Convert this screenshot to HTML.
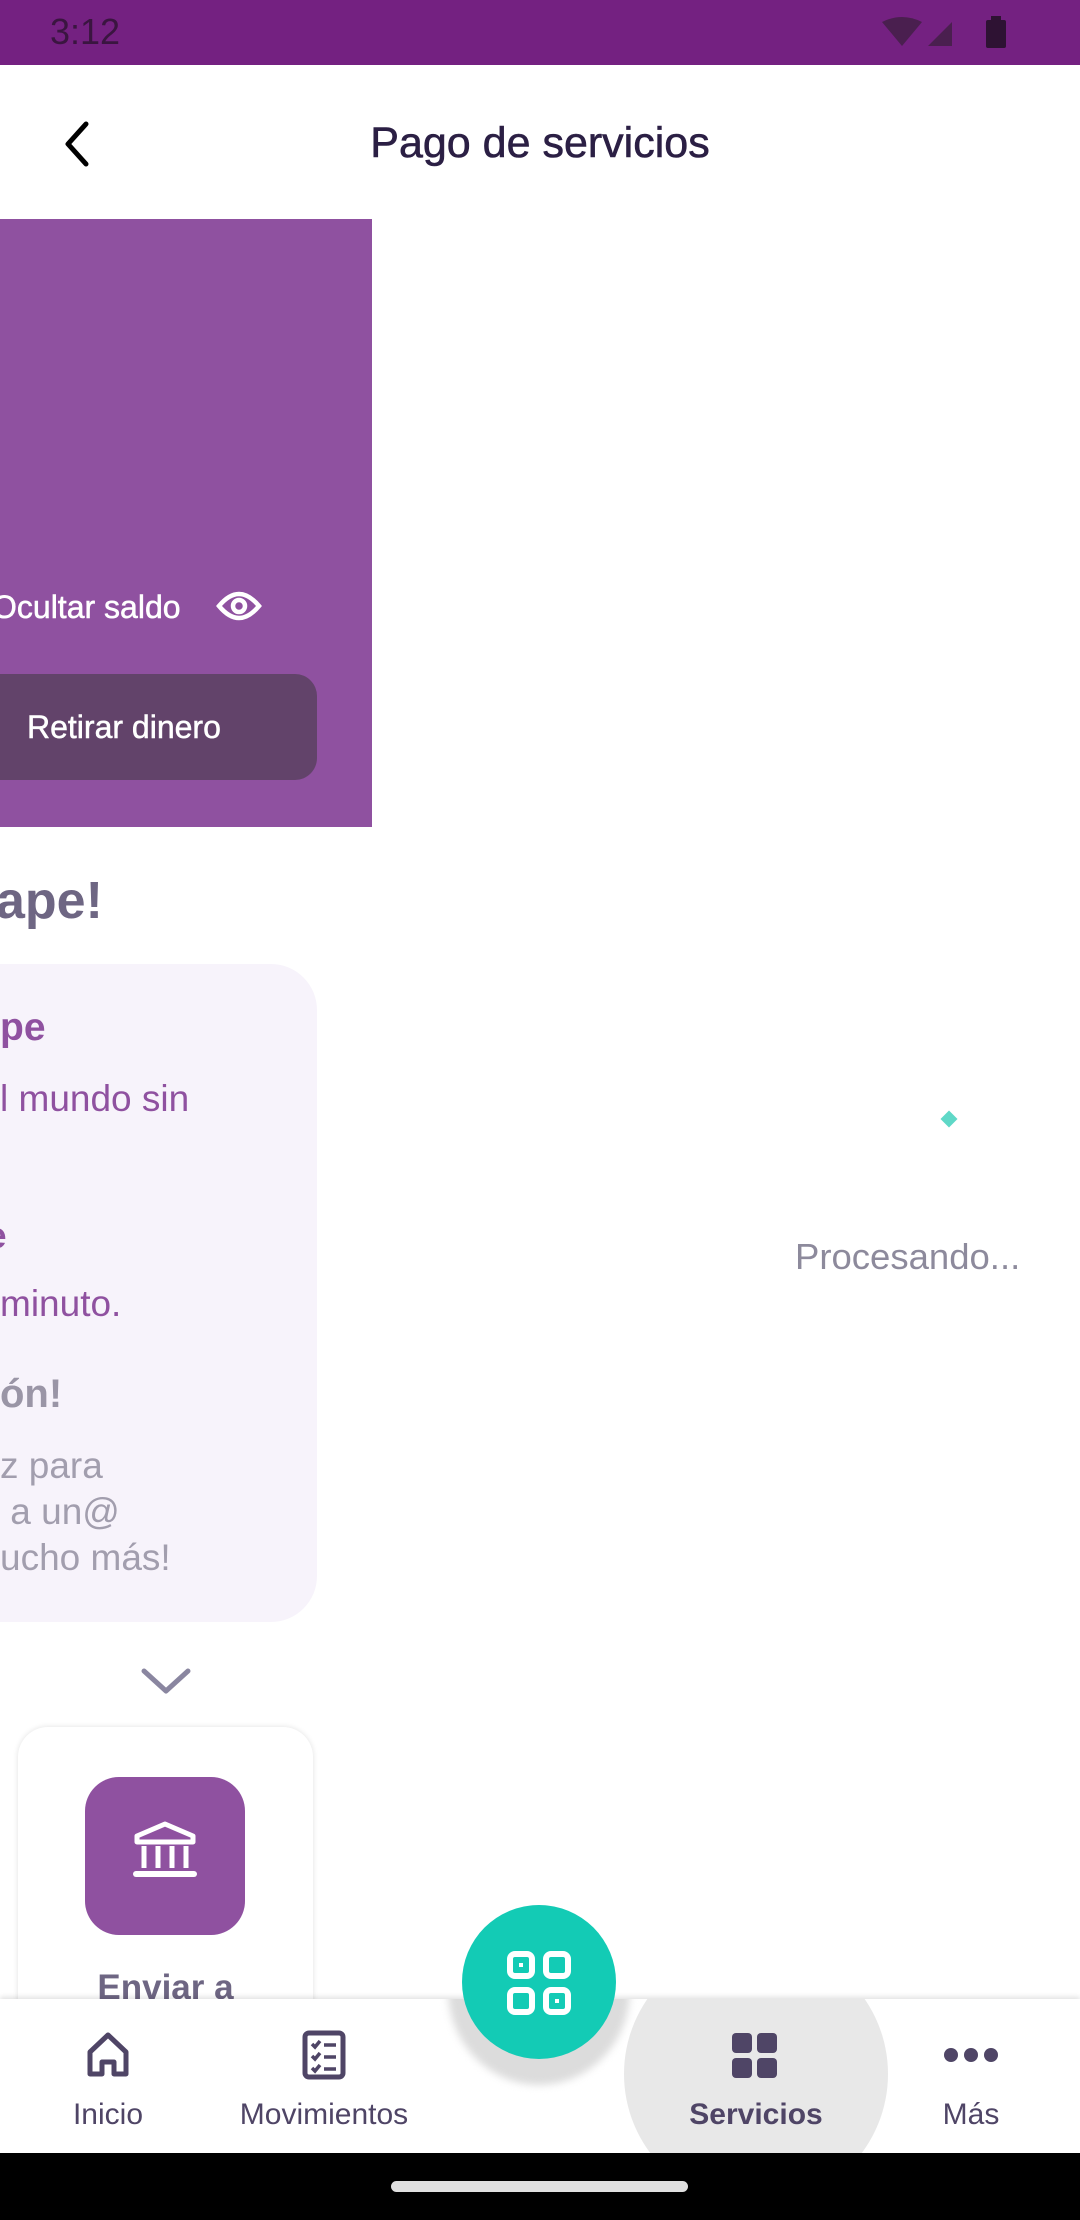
<!DOCTYPE html>
<html><head><meta charset="utf-8"><style>
*{margin:0;padding:0;box-sizing:border-box}
body{width:1080px;height:2220px;position:relative;overflow:hidden;background:#fff;font-family:"Liberation Sans",sans-serif}
.a{position:absolute;white-space:nowrap}
</style></head><body>
<div class="a" style="left:0;top:0;width:1080px;height:65px;background:#742181"></div>
<div class="a" style="left:50px;top:10px;font-size:36px;color:#3a1540;line-height:44px">3:12</div>
<svg class="a" style="left:880px;top:16px" width="130" height="34" viewBox="0 0 130 34">
<path d="M2 6 Q22 -4 42 6 L22 30 Z" fill="#4a1f4f"/>
<path d="M48 30 L72 6 L72 30 Z" fill="#4a1f4f"/>
<rect x="106" y="4" width="20" height="28" rx="2" fill="#2e1233"/><rect x="111" y="0" width="10" height="5" fill="#2e1233"/>
</svg>
<svg class="a" style="left:58px;top:120px" width="40" height="48" viewBox="0 0 40 48"><path d="M28 4 L10 24 L28 44" fill="none" stroke="#000" stroke-width="5" stroke-linecap="round" stroke-linejoin="round"/></svg>
<div class="a" style="left:0;width:1080px;top:116px;text-align:center;font-size:43px;color:#2b1f44;line-height:54px;-webkit-text-stroke:0.6px #2b1f44">Pago de servicios</div>

<div class="a" style="left:0;top:219px;width:372px;height:608px;background:#8f51a0"></div>
<div class="a" style="left:-8px;top:587px;font-size:32px;color:#fff;line-height:40px;-webkit-text-stroke:0.5px #fff">Ocultar saldo</div>
<svg class="a" style="left:216px;top:588px" width="46" height="36" viewBox="0 0 46 36"><path d="M3 18 Q23 -6 43 18 Q23 42 3 18 Z" fill="none" stroke="#fff" stroke-width="4.5"/><circle cx="23" cy="18" r="6" fill="none" stroke="#fff" stroke-width="4.5"/></svg>
<div class="a" style="left:-30px;top:674px;width:347px;height:106px;background:#62436a;border-radius:22px"></div>
<div class="a" style="left:27px;top:707px;font-size:32px;color:#fff;line-height:40px;-webkit-text-stroke:0.5px #fff">Retirar dinero</div>

<div class="a" style="left:-4px;top:872px;font-size:52px;font-weight:bold;color:#6e6683;line-height:58px">ape!</div>
<div class="a" style="left:-60px;top:964px;width:377px;height:658px;background:#f7f3fb;border-radius:46px"></div>
<div class="a" style="left:0;top:1005px;font-size:39px;font-weight:bold;color:#8f51a0;line-height:46px">pe</div>
<div class="a" style="left:0;top:1077px;font-size:37px;color:#8f51a0;line-height:44px">l mundo sin</div>
<div class="a" style="left:-14px;top:1214px;font-size:37px;font-weight:bold;color:#8f51a0;line-height:44px">e</div>
<div class="a" style="left:0;top:1282px;font-size:37px;color:#8f51a0;line-height:44px">minuto.</div>
<div class="a" style="left:0;top:1371px;font-size:40px;font-weight:bold;color:#9a95a6;line-height:46px">ón!</div>
<div class="a" style="left:0;top:1443px;font-size:37px;color:#a29eae;line-height:46px">z para<br>&nbsp;a un@<br>ucho más!</div>

<svg class="a" style="left:140px;top:1667px" width="52" height="30" viewBox="0 0 52 30"><path d="M4 4 L26 24 L48 4" fill="none" stroke="#8a86a0" stroke-width="5" stroke-linecap="round" stroke-linejoin="round"/></svg>

<div class="a" style="left:18px;top:1727px;width:295px;height:340px;background:#fff;border-radius:30px;box-shadow:0 0 6px rgba(0,0,0,0.12)"></div>
<div class="a" style="left:85px;top:1777px;width:160px;height:158px;background:#8f51a0;border-radius:34px"></div>
<svg class="a" style="left:130px;top:1820px" width="70" height="70" viewBox="0 0 70 70"><path d="M35 4 L63 16 L63 22 L7 22 L7 16 Z" fill="none" stroke="#fff" stroke-width="5" stroke-linejoin="round"/><path d="M14 26 V48 M28 26 V48 M42 26 V48 M56 26 V48" stroke="#fff" stroke-width="5"/><path d="M6 54 H64" stroke="#fff" stroke-width="6" stroke-linecap="round"/></svg>
<div class="a" style="left:18px;width:295px;top:1966px;text-align:center;font-size:35px;font-weight:bold;color:#6e6683;line-height:44px">Enviar a</div>

<div class="a" style="left:943px;top:1113px;width:12px;height:12px;background:#5fd8c7;transform:rotate(45deg)"></div>
<div class="a" style="left:795px;top:1235px;font-size:36.5px;color:#8d8a9c;line-height:44px">Procesando...</div>

<div class="a" style="left:0;top:1999px;width:1080px;height:160px;background:#fff;box-shadow:0 -2px 5px rgba(0,0,0,0.12);overflow:hidden">
<div class="a" style="left:624px;top:-57px;width:264px;height:264px;border-radius:50%;background:#e8e8e8"></div>
<div class="a" style="left:448px;top:-104px;width:182px;height:190px;border-radius:50%;background:#dcdcdc;filter:blur(4px)"></div>
</div>
<div class="a" style="left:462px;top:1905px;width:154px;height:154px;border-radius:50%;background:#13cbb5"></div>
<svg class="a" style="left:506px;top:1950px" width="66" height="66" viewBox="0 0 66 66"><g fill="none" stroke="#fff" stroke-width="6"><rect x="4" y="4" width="22" height="22" rx="5"/><rect x="40" y="4" width="22" height="22" rx="5"/><rect x="4" y="40" width="22" height="22" rx="5"/><rect x="40" y="40" width="22" height="22" rx="5"/></g><rect x="13" y="13" width="4" height="4" fill="#fff"/><rect x="49" y="49" width="4" height="4" fill="#fff"/></svg>

<svg class="a" style="left:84px;top:2030px" width="48" height="50" viewBox="0 0 48 50"><path d="M6 22 L24 5 L42 22 V44 H30 V32 H18 V44 H6 Z" fill="none" stroke="#4f4566" stroke-width="5" stroke-linejoin="round"/></svg>
<svg class="a" style="left:302px;top:2030px" width="44" height="50" viewBox="0 0 44 50"><rect x="3" y="3" width="38" height="44" rx="4" fill="none" stroke="#4f4566" stroke-width="5"/><path d="M10 14 l3 3 l5 -6 M10 26 l3 3 l5 -6 M10 38 l3 3 l5 -6 M22 15 H34 M22 27 H34 M22 39 H34" fill="none" stroke="#4f4566" stroke-width="3.5"/></svg>
<svg class="a" style="left:731px;top:2032px" width="48" height="48" viewBox="0 0 48 48"><rect x="1" y="1" width="20" height="20" rx="4" fill="#4f4566"/><rect x="26" y="1" width="20" height="20" rx="4" fill="#4f4566"/><rect x="1" y="26" width="20" height="20" rx="4" fill="#4f4566"/><rect x="26" y="26" width="20" height="20" rx="4" fill="#4f4566"/></svg>
<svg class="a" style="left:943px;top:2045px" width="56" height="20" viewBox="0 0 56 20"><circle cx="8" cy="10" r="7" fill="#4f4566"/><circle cx="28" cy="10" r="7" fill="#4f4566"/><circle cx="48" cy="10" r="7" fill="#4f4566"/></svg>
<div class="a" style="left:8px;width:200px;top:2097px;text-align:center;font-size:30px;color:#4f4566;line-height:36px">Inicio</div>
<div class="a" style="left:194px;width:260px;top:2097px;text-align:center;font-size:30px;color:#4f4566;line-height:36px">Movimientos</div>
<div class="a" style="left:636px;width:240px;top:2097px;text-align:center;font-size:30px;font-weight:bold;color:#4f4566;line-height:36px">Servicios</div>
<div class="a" style="left:871px;width:200px;top:2097px;text-align:center;font-size:30px;color:#4f4566;line-height:36px">Más</div>

<div class="a" style="left:0;top:2153px;width:1080px;height:67px;background:#000"></div>
<div class="a" style="left:391px;top:2181px;width:297px;height:11px;border-radius:6px;background:#e0e0e0"></div>
</body></html>
